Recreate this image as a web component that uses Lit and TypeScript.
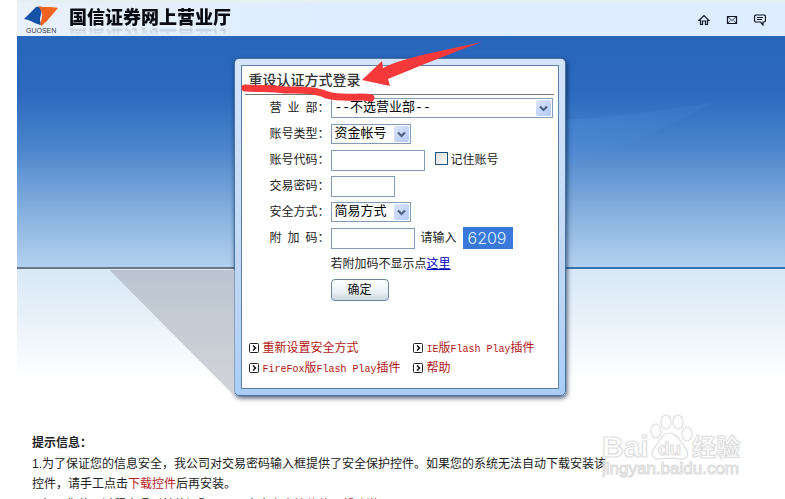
import { LitElement, html, css, svg } from "lit";
import { customElement, property } from "lit/decorators.js";

const FONT = css`"Liberation Sans", "Noto Sans CJK SC", sans-serif`;

@customElement("select-box")
class SelectBox extends LitElement {
  @property() label = "";
  @property({ type: Array }) options: string[] = [];

  static styles = css`
    :host { display: block; position: relative; height: 20px; }
    .native {
      appearance: none; box-sizing: border-box; display: block; width: 100%; height: 20px;
      margin: 0; padding: 0 18px 0 3px; border: 1px solid #7f9db9; border-radius: 0;
      background: #fff; color: #000; font: 13px/18px "Liberation Mono", "Noto Sans CJK SC", monospace;
    }
    .arrow {
      position: absolute; top: 2px; right: 2px; width: 15px; height: 16px; pointer-events: none;
      border-radius: 2px; background: linear-gradient(135deg, #dbe5fd, #b4c9f4);
    }
  `;

  render() {
    return html`
      <select class="native" aria-label=${this.label}>
        ${this.options.map((o) => html`<option>${o}</option>`)}
      </select>
      <svg class="arrow" viewBox="0 0 15 16" aria-hidden="true">
        <path d="M4 6.5l3.5 3.5L11 6.5" fill="none" stroke="#4d6185" stroke-width="2.2" />
      </svg>
    `;
  }
}

@customElement("app-header")
class AppHeader extends LitElement {
  static styles = css`
    :host {
      display: flex; align-items: center; box-sizing: border-box; height: 36px; padding: 0 19px 0 6px;
      border-top: 3px solid #e6eff2; background: linear-gradient(90deg, #e9f1fa, #deedff 40%);
    }
    .logo { width: 36px; height: 30px; }
    .name {
      margin: 0 auto 4px 10px; font: 900 18px/26px ${FONT}; color: #080c12;
      -webkit-box-reflect: below -8px linear-gradient(transparent 50%, rgba(0, 0, 0, 0.25));
    }
    .tools { display: flex; gap: 16px; }
    .tool { display: block; width: 12px; height: 12px; }
    .glyph { display: block; width: 12px; height: 12px; fill: none; stroke: #111622; stroke-width: 1.2; }
  `;

  render() {
    return html`
      <svg class="logo" viewBox="0 0 36 30" aria-hidden="true">
        <path d="M1 14L13 2c3-1 4 0 5 3 1 4-1 6-1 10l1 5C12 19 8 15 1 14z" fill="#1652a6" />
        <path d="M15 1c7 2 12 0 20 2L23 17c-3 2-3 3-5 4-2-4 2-7 1-12-1-4-2-6-4-8z" fill="#f26322" />
        <text x="3" y="28" font-family="Liberation Sans" font-size="7" fill="#3c414b">GUOSEN</text>
      </svg>
      <h1 class="name">国信证券网上营业厅</h1>
      <nav class="tools">
        <a class="tool" href="#home" aria-label="首页"><svg class="glyph" viewBox="0 0 12 12"
          ><path d="M1 6.5L6 1.5l5 5H9.5v4h-2V7h-3v3.5h-2v-4z" /></svg></a>
        <a class="tool" href="#mail" aria-label="邮件"><svg class="glyph" viewBox="0 0 12 12"
          ><path d="M1.5 2.5h9v7h-9z" /><path d="M2 3L6 6.5 10 3M2 9l2.500-2.500M10 9L7.500 6.500" stroke-width=".8" /></svg></a>
        <a class="tool" href="#chat" aria-label="留言"><svg class="glyph" viewBox="0 0 12 12"
          ><path d="M1.500 1h9l1 1v5l-1 1H9v3L6.500 8h-5l-1-1V2zM3 3.500h6M3 5.500h5" /></svg></a>
      </nav>
    `;
  }
}

@customElement("login-panel")
class LoginPanel extends LitElement {
  static styles = css`
    :host {
      display: block; position: relative; box-sizing: border-box; width: 332px; padding: 6px;
      border: 1px solid #47719f; border-radius: 5px;
      background: linear-gradient(#d4e4f8, #bdd6f5 70%, #a9cdf8);
      box-shadow: 1px 2px 5px rgba(10, 30, 60, 0.75);
    }
    .shade {
      position: absolute; right: 100%; top: 211px; width: 125px; height: 126px;
      clip-path: polygon(0 0, 100% 0, 100% 100%);
      background: linear-gradient(#bac5d1, #d3d4d8);
    }
    .body {
      display: flex; flex-direction: column; box-sizing: border-box; min-height: 324px;
      padding: 0 4px 10px 3px; border: 1px solid #5c7fa6; background: #fff;
      font: 12px/20px ${FONT}; color: #222;
    }
    .title {
      margin: 0; padding: 0 4px; border-bottom: 1px solid #777;
      font: 500 14px/28px ${FONT}; color: #333;
    }
    .form { display: flex; flex-direction: column; padding-left: 25px; }
    .row { display: flex; align-items: center; height: 26px; }
    .label { flex: none; width: 61px; white-space: nowrap; }
    .indent { margin-left: 61px; }
    .dept { width: 222px; }
    .narrow { width: 80px; }
    .field {
      box-sizing: border-box; height: 21px; margin: 0; padding: 0 3px;
      border: 1px solid #7f9db9; background: #fff; font: 13px ${FONT};
    }
    .account { width: 94px; }
    .password { width: 64px; }
    .extra { width: 84px; }
    .remember { display: flex; align-items: center; gap: 3px; margin-left: 10px; }
    .tick {
      appearance: none; box-sizing: border-box; width: 13px; height: 13px; margin: 0 0 4px;
      border: 1px solid #1c5180; background: linear-gradient(135deg, #dcdcd7, #fff);
    }
    .tick:checked { background: #1c5180; }
    .hint { margin: 0 6px; }
    .code {
      box-sizing: border-box; width: 50px; padding-left: 5px; background: #3a79da; color: #d8f1f8;
      font: 300 16px/22px Inter, ${FONT};
    }
    .here { color: #0000b8; }
    .submit {
      box-sizing: border-box; width: 58px; height: 22px; padding: 0; border: 1px solid #6b8498;
      border-radius: 4px; background: linear-gradient(#fff, #e9f0f3 60%, #cbd9e0);
      font: 12px/18px ${FONT}; color: #111;
    }
    .links {
      display: grid; grid-template-columns: 164px 1fr; grid-auto-rows: 20px; margin: auto 0 0;
      padding: 0 0 0 4px; list-style: none;
    }
    .item { display: flex; align-items: center; gap: 4px; white-space: nowrap; }
    .bullet { width: 10px; height: 10px; }
    .link { color: #b21414; text-decoration: none; }
    .latin { font: 10px/12px "Liberation Mono", monospace; }
    .mark { position: absolute; left: 0; top: -22px; width: 250px; height: 70px; pointer-events: none; }
  `;

  private item(href: string, text: unknown) {
    return html`<li class="item">
      <svg class="bullet" viewBox="0 0 10 10" aria-hidden="true">
        <rect x=".5" y=".5" width="9" height="9" rx="1" fill="#fff" stroke="#222" />
        <path d="M4 2.5L6.5 5 4 7.5" fill="none" stroke="#111" stroke-width="1.5" />
      </svg>
      <a class="link" href=${href}>${text}</a>
    </li>`;
  }

  render() {
    return html`
      <div class="shade"></div>
      <div class="body">
        <h2 class="title">重设认证方式登录</h2>
        <form class="form">
          <div class="row">
            <span class="label">营&ensp;业&ensp;部：</span>
            <select-box class="dept" label="营业部" .options=${["--不选营业部--"]}></select-box>
          </div>
          <div class="row">
            <span class="label">账号类型：</span>
            <select-box class="narrow" label="账号类型" .options=${["资金帐号"]}></select-box>
          </div>
          <div class="row">
            <label class="label" for="account">账号代码：</label>
            <input class="field account" id="account" type="text" />
            <label class="remember"><input class="tick" type="checkbox" />记住账号</label>
          </div>
          <div class="row">
            <label class="label" for="password">交易密码：</label>
            <input class="field password" id="password" type="password" />
          </div>
          <div class="row">
            <span class="label">安全方式：</span>
            <select-box class="narrow" label="安全方式" .options=${["简易方式"]}></select-box>
          </div>
          <div class="row">
            <label class="label" for="extra">附&ensp;加&ensp;码：</label>
            <input class="field extra" id="extra" type="text" />
            <span class="hint">请输入</span>
            <span class="code">6209</span>
          </div>
          <div class="row"><span class="indent">若附加码不显示点<a class="here" href="#refresh">这里</a></span></div>
          <div class="row"><button class="submit indent" type="button">确定</button></div>
        </form>
        <ul class="links">
          ${this.item("#reset", "重新设置安全方式")}
          ${this.item("#ie", html`<span class="latin">IE</span>版<span class="latin">Flash Play</span>插件`)}
          ${this.item("#firefox", html`<span class="latin">FireFox</span>版<span class="latin">Flash Play</span>插件`)}
          ${this.item("#help", "帮助")}
        </ul>
      </div>
      <svg class="mark" viewBox="0 0 250 70" aria-hidden="true">
        <path d="M247 5C216 12 169 20 148 31l-1-7-20 19 28 6-2-7C177 32 219 15 247 5z" fill="#f5393b" />
        <path d="M10 51c14 1 27 0 40 2 14 0 24-1 37 3 6 3 12 4 21 4 11 1 19-1 28 1" fill="none"
          stroke="#f5393b" stroke-width="7" stroke-linecap="round" stroke-linejoin="round" />
      </svg>
    `;
  }
}

@customElement("baidu-stamp")
class BaiduStamp extends LitElement {
  static styles = css`
    :host { display: block; width: 144px; height: 72px; }
    .art { display: block; width: 144px; height: 72px; }
  `;

  render() {
    const pads = [[54, 19, 5, 7], [64, 10, 5, 7], [76, 10, 5, 7], [85, 22, 5, 7]];
    return html`<svg class="art" viewBox="0 0 144 72" fill="#fff" stroke="#dedede" stroke-width="1.2"
      font-family="Liberation Sans, Noto Sans CJK SC, sans-serif" font-weight="700">
      <text x="0" y="45" font-size="30">Bai</text>
      ${pads.map(([x, y, rx, ry]) => svg`<ellipse cx=${x} cy=${y} rx=${rx} ry=${ry} />`)}
      <path d="M67 21c9 0 11 9 16 14 6 9 1 13-6 12-6-1-13-1-18 0-8 1-12-5-6-12 5-5 6-14 14-14z" />
      <text x="56" y="43" font-size="19">du</text>
      <text x="90" y="44" font-size="24">经验</text>
      <text x="0" y="62" font-size="17" font-weight="400">jingyan.baidu.com</text>
    </svg>`;
  }
}

@customElement("app-root")
class AppRoot extends LitElement {
  static styles = css`
    :host { display: block; position: relative; background: #fff; font: 12px/20px ${FONT}; color: #222; }
    .page { padding-left: 17px; }
    .stage {
      display: flex; justify-content: center; align-items: flex-start; position: relative;
      padding: 22px 3px 37px 0;
      background:
        linear-gradient(90deg, #687889 28%, #3775b2 75%) 0 231px / 100% 2px no-repeat,
        linear-gradient(#2866bb, #2d6abf 25%, #4a84cb 48%, #8ab3e0 78%, #b3d1ef) 0 0 / 100% 231px no-repeat,
        linear-gradient(#d8e8f6, #e6f0f9 40%, #fff) 0 233px / 100% 110px no-repeat;
    }
    .rays { position: absolute; right: 0; top: 0; width: 220px; height: 231px; }
    .tips { display: flex; flex-direction: column; gap: 1px; max-width: 578px; padding: 0 15px 20px; }
    .heading { margin: 0; font: 700 12px/20px ${FONT}; }
    .tip { margin: 0; }
    .red { color: #b81c1c; text-decoration: none; }
    .stamp { position: absolute; left: 602px; top: 412px; }
  `;

  render() {
    return html`
      <div class="page">
        <app-header></app-header>
        <main class="stage">
          <svg class="rays" viewBox="0 0 220 231" preserveAspectRatio="none" aria-hidden="true">
            <defs><linearGradient id="ray" x1="0" x2="1" y1="0" y2="1"
              ><stop offset="0" stop-color="#5a9cf0" stop-opacity=".3" /><stop offset=".7" stop-color="#5a9cf0" stop-opacity="0"
            /></linearGradient></defs>
            <path d="M0 84Q70 80 150 66Q80 104 0 132z" fill="url(#ray)" />
          </svg>
          <login-panel></login-panel>
        </main>
        <section class="tips">
          <h3 class="heading">提示信息：</h3>
          <p class="tip">1.为了保证您的信息安全，我公司对交易密码输入框提供了安全保护控件。如果您的系统无法自动下载安装该控件，请手工点击<a class="red" href="#download">下载控件</a>后再安装。</p>
          <p class="tip">2.如果您使用过程中遇到其他问题，可以点击<a class="red" href="#guide">安全控件使用帮助说明</a></p>
        </section>
      </div>
      <baidu-stamp class="stamp"></baidu-stamp>
    `;
  }
}
